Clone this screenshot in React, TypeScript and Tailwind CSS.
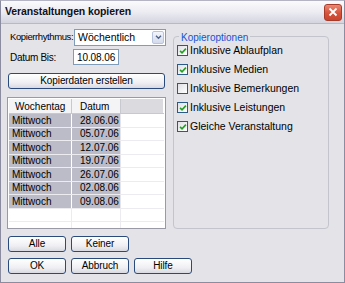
import type { ReactNode } from "react";

const dates = ["28.06.06", "05.07.06", "12.07.06", "19.07.06", "26.07.06", "02.08.06", "09.08.06"];

const options = [
  { label: "Inklusive Ablaufplan", checked: true },
  { label: "Inklusive Medien", checked: true },
  { label: "Inklusive Bemerkungen", checked: false },
  { label: "Inklusive Leistungen", checked: true },
  { label: "Gleiche Veranstaltung", checked: true },
];

function Btn({ children, className = "" }: { children: ReactNode; className?: string }) {
  return (
    <button
      className={`flex h-[16px] items-center justify-center rounded-[3px] border border-[#2a4a7c] bg-[linear-gradient(to_bottom,#ffffff,#f0f0f4_60%,#d9d9e3)] text-[10px] leading-none tracking-[-0.1px] text-black ${className}`}
    >
      {children}
    </button>
  );
}

function Check({ checked }: { checked: boolean }) {
  return (
    <span className="flex size-[11px] shrink-0 items-center justify-center border border-[#2a5a88] bg-[linear-gradient(135deg,#e0e0e6,#ffffff)]">
      {checked && (
        <svg viewBox="0 0 9 9" className="size-[8px]">
          <path d="M1.2 4.3 L3.4 6.6 L7.8 1.8" fill="none" stroke="#21a121" strokeWidth="1.8" />
        </svg>
      )}
    </span>
  );
}

export default function App() {
  return (
    <div
      className="h-[283px] w-[345px] overflow-hidden bg-[#e3e3e8] text-black"
      style={{ fontFamily: '"Liberation Sans", Arial, sans-serif' }}
    >
      <div className="flex h-full w-full flex-col border border-[#8c8ca0] border-t-[#b4b4c4]">
        {/* title bar */}
        <div className="flex h-[23px] items-center justify-between border-b border-[#b8b8c8] bg-[linear-gradient(to_bottom,#fbfbfd,#ececf2_50%,#d4d4e0)] pl-[4px] pr-[2px]">
          <span className="text-[10.5px] font-bold tracking-[-0.1px] text-[#101020]">Veranstaltungen kopieren</span>
          <div className="flex h-[17px] w-[18px] items-center justify-center rounded-[3px] border border-[#a83a2a] bg-[linear-gradient(to_bottom,#ea8a74,#d6523a_55%,#c8442e)]">
            <svg viewBox="0 0 10 10" className="size-[10px]">
              <path d="M1.5 1.5 L8.5 8.5 M8.5 1.5 L1.5 8.5" stroke="#ffffff" strokeWidth="1.8" />
            </svg>
          </div>
        </div>

        {/* body */}
        <div className="flex flex-1 flex-col px-[6px]">
          <div className="flex gap-[7px] pt-[5px]">
            {/* left column */}
            <div className="flex w-[159px] flex-col">
              <div className="flex h-[17px] items-center">
                <span className="w-[67px] shrink-0 whitespace-nowrap pl-[3px] text-[9.5px] tracking-[-0.4px]">Kopierrhythmus:</span>
                <div className="flex h-[17px] flex-1 items-center justify-between border border-[#7f9db9] bg-white pl-[3px]">
                  <span className="text-[10.5px] tracking-[0px]">Wöchentlich</span>
                  <span className="mr-[1px] flex h-[13px] w-[12px] items-center justify-center rounded-[2px] border border-[#b8c4dc] bg-[linear-gradient(to_bottom,#f4f6fc,#d4daec)]">
                    <svg viewBox="0 0 8 6" className="h-[5px] w-[7px]">
                      <path d="M1 1 L4 4 L7 1" fill="none" stroke="#4d6185" strokeWidth="1.6" />
                    </svg>
                  </span>
                </div>
              </div>

              <div className="mt-[3px] flex h-[16px] items-center">
                <span className="w-[66px] shrink-0 pl-[3px] text-[10px] tracking-[-0.3px]">Datum Bis:</span>
                <div className="flex h-[16px] w-[46px] items-center border border-[#7f9db9] bg-white pl-[3px] text-[10px] tracking-[-0.1px]">
                  10.08.06
                </div>
              </div>

              <Btn className="mt-[8px] ml-[1px] w-[157px]">Kopierdaten erstellen</Btn>

              {/* table */}
              <div className="mt-[8px] h-[132px] overflow-hidden border border-[#9a9aa6] bg-white p-[1px]">
                <div className="flex h-[15px] border-b border-[#c8c8d0] text-[10px]">
                  <div className="flex w-[63px] items-center border-r border-[#c8c8d0] bg-[#f4f4f6] pl-[6px]">Wochentag</div>
                  <div className="flex w-[49px] items-center border-r border-[#c8c8d0] bg-[#f4f4f6] pl-[8px]">Datum</div>
                  <div className="w-[42px] bg-[#dadadf]" />
                </div>
                {dates.map((d) => (
                  <div key={d} className="flex h-[13.5px] border-b border-[#ececf0] text-[10px]">
                    <div className="flex w-[63px] items-center border-r border-white bg-[#bcbcc8] pl-[3px]">Mittwoch</div>
                    <div className="flex w-[49px] items-center border-r border-[#e4e4ea] bg-[#bcbcc8] pl-[8px]">{d}</div>
                    <div className="w-[42px]" />
                  </div>
                ))}
                {[0, 1].map((i) => (
                  <div key={i} className="flex h-[13.5px] border-b border-[#ececf0]">
                    <div className="w-[63px] border-r border-[#ececf0]" />
                    <div className="w-[49px] border-r border-[#ececf0]" />
                    <div className="w-[42px]" />
                  </div>
                ))}
              </div>
            </div>

            {/* options */}
            <div className="relative mt-[7px] h-[193px] w-[156px] rounded-[4px] border border-[#c4c4cc]">
              <span className="absolute -top-[7px] left-[5px] bg-[#e3e3e8] px-[2px] text-[10px] tracking-[0px] text-[#1652d6]">
                Kopieroptionen
              </span>
              <div className="flex flex-col gap-[8px] pl-[3px] pt-[8px]">
                {options.map((o) => (
                  <div key={o.label} className="flex h-[11px] items-center gap-[2px]">
                    <Check checked={o.checked} />
                    <span className="whitespace-nowrap text-[10.5px] tracking-[0px]">{o.label}</span>
                  </div>
                ))}
              </div>
            </div>
          </div>

          {/* buttons */}
          <div className="mt-[7px] flex gap-[5px] pl-[1px]">
            <Btn className="w-[58px]">Alle</Btn>
            <Btn className="w-[58px]">Keiner</Btn>
          </div>
          <div className="mt-[6px] flex gap-[5px] pl-[1px]">
            <Btn className="w-[58px]">OK</Btn>
            <Btn className="w-[58px]">Abbruch</Btn>
            <Btn className="w-[58px]">Hilfe</Btn>
          </div>
        </div>
      </div>
    </div>
  );
}
